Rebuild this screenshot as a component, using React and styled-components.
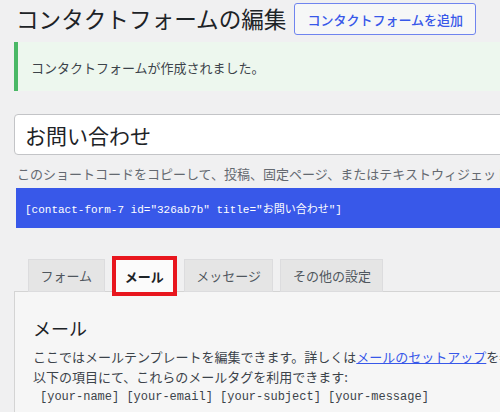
import React from 'react'
import styled, { createGlobalStyle } from 'styled-components'

const GlobalStyle = createGlobalStyle`
  html, body {
    margin: 0;
    padding: 0;
    background: #f0f0f1;
    overflow: hidden;
  }
  body {
    font-family: "Noto Sans CJK JP", "Noto Sans", sans-serif;
    color: #3c434a;
  }
`

const CJK = '"Noto Sans CJK JP", "Noto Sans", sans-serif'
const MONO = '"Liberation Mono", "Noto Sans CJK JP", monospace'

const Page = styled.div`
  width: 560px;
  padding-left: 14px;
`

const TitleRow = styled.div`
  display: flex;
  align-items: center;
  gap: 8px;
  padding-top: 3px;
  height: 32px;
`

const Title = styled.h1`
  margin: 0 0 0 2px;
  font-family: ${CJK};
  font-size: 22.6px;
  font-weight: 400;
  line-height: 32px;
  color: #1d2327;
  white-space: nowrap;
`

const AddButton = styled.button`
  height: 32px;
  box-sizing: border-box;
  padding: 0 12px;
  border: 1px solid #6f84ef;
  border-radius: 3px;
  background: #f6f7f7;
  color: #3858e9;
  font-family: ${CJK};
  font-size: 13px;
  font-weight: 500;
  white-space: nowrap;
`

const Notice = styled.div`
  margin-top: 7px;
  height: 49px;
  box-sizing: border-box;
  padding: 16px 0 13px 13px;
  border-left: 4px solid #4ab866;
  background: #edf7ee;
  font-size: 13px;
  line-height: 20px;
  color: #3c434a;
`

const TitleInput = styled.div`
  margin-top: 23px;
  height: 41px;
  box-sizing: border-box;
  padding-left: 10px;
  display: flex;
  align-items: center;
  background: #fff;
  border: 1px solid #c3c4c7;
  border-radius: 4px;
  font-size: 21px;
  color: #1d2327;
`

const Description = styled.p`
  margin: 9px 0 0 3px;
  font-size: 13px;
  line-height: 20px;
  color: #646970;
  white-space: nowrap;
`

const Shortcode = styled.div`
  margin: 4px 0 0 2px;
  height: 40px;
  box-sizing: border-box;
  padding-left: 9px;
  display: flex;
  align-items: center;
  background: #3858e9;
  color: #fff;
  font-family: ${MONO};
  font-size: 11px;
  white-space: nowrap;
`

const TabList = styled.div`
  position: relative;
  z-index: 1;
  display: flex;
  align-items: flex-start;
  gap: 7px;
  margin: 28px 0 -5px 14px;
  height: 40px;
`

const Tab = styled.div`
  margin-top: ${p => (p.$active ? 0 : 3)}px;
  height: ${p => (p.$active ? 40 : 33)}px;
  box-sizing: border-box;
  padding: 0 ${p => (p.$active ? 9 : 11.5)}px;
  display: flex;
  align-items: center;
  background: ${p => (p.$active ? '#fbfbfb' : '#e5e5e5')};
  border: ${p => (p.$active ? '4px solid #e8161e' : '1px solid #dcdcde')};
  font-size: 13px;
  font-weight: ${p => (p.$active ? 700 : 400)};
  color: ${p => (p.$active ? '#1d2327' : '#50575e')};
  white-space: nowrap;
`

const Panel = styled.div`
  background: #f6f6f6;
  border: 1px solid #d4d4d4;
  padding: 24px 0 20px 18px;
`

const PanelTitle = styled.h2`
  margin: 0;
  font-size: 18px;
  font-weight: 400;
  line-height: 24px;
  color: #1d2327;
`

const Text = styled.p`
  margin: 7px 0 0;
  font-size: 13px;
  line-height: 20px;
  color: #3c434a;
  white-space: nowrap;
`

const Link = styled.a`
  color: #3858e9;
  text-decoration: underline;
`

const Tags = styled.div`
  margin-left: 7px;
  font-family: ${MONO};
  font-size: 12px;
  line-height: 20px;
  color: #3c434a;
  white-space: nowrap;
`

const tabs = ['フォーム', 'メール', 'メッセージ', 'その他の設定']

export default function App() {
  return (
    <>
      <GlobalStyle />
      <Page>
        <TitleRow>
          <Title>コンタクトフォームの編集</Title>
          <AddButton>コンタクトフォームを追加</AddButton>
        </TitleRow>

        <Notice>コンタクトフォームが作成されました。</Notice>

        <TitleInput>お問い合わせ</TitleInput>

        <Description>
          このショートコードをコピーして、投稿、固定ページ、またはテキストウィジェットの内容にペーストしてください:
        </Description>
        <Shortcode>[contact-form-7 id="326ab7b" title="お問い合わせ"]</Shortcode>

        <TabList>
          {tabs.map(t => (
            <Tab key={t} $active={t === 'メール'}>
              {t}
            </Tab>
          ))}
        </TabList>
        <Panel>
          <PanelTitle>メール</PanelTitle>
          <Text>
            ここではメールテンプレートを編集できます。詳しくは<Link>メールのセットアップ</Link>を参照してください。
            <br />
            以下の項目にて、これらのメールタグを利用できます:
          </Text>
          <Tags>[your-name] [your-email] [your-subject] [your-message]</Tags>
        </Panel>
      </Page>
    </>
  )
}
